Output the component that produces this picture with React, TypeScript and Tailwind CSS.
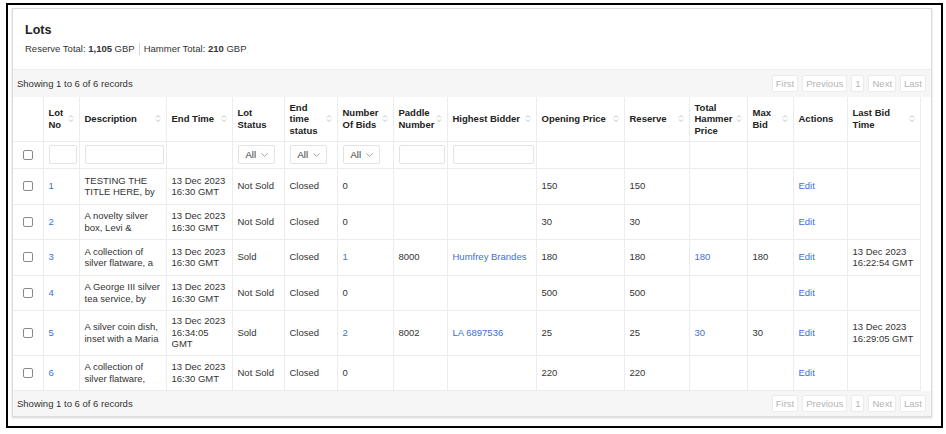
import React from "react";

type Cell = string | { link: string };

interface Lot {
	no: string;
	desc: string[];
	end: string[];
	status: string;
	endStatus: string;
	bids: Cell;
	paddle: string;
	bidder: Cell;
	opening: string;
	reserve: string;
	hammer: Cell;
	maxBid: string;
	lastBid: string[];
	h: string;
}

const lots: Lot[] = [
	{ no: "1", desc: ["TESTING THE", "TITLE HERE, by"], end: ["13 Dec 2023", "16:30 GMT"], status: "Not Sold", endStatus: "Closed", bids: "0", paddle: "", bidder: "", opening: "150", reserve: "150", hammer: "", maxBid: "", lastBid: [], h: "h-[36px]" },
	{ no: "2", desc: ["A novelty silver", "box, Levi &"], end: ["13 Dec 2023", "16:30 GMT"], status: "Not Sold", endStatus: "Closed", bids: "0", paddle: "", bidder: "", opening: "30", reserve: "30", hammer: "", maxBid: "", lastBid: [], h: "h-[35px]" },
	{ no: "3", desc: ["A collection of", "silver flatware, a"], end: ["13 Dec 2023", "16:30 GMT"], status: "Sold", endStatus: "Closed", bids: { link: "1" }, paddle: "8000", bidder: { link: "Humfrey Brandes" }, opening: "180", reserve: "180", hammer: { link: "180" }, maxBid: "180", lastBid: ["13 Dec 2023", "16:22:54 GMT"], h: "h-[36px]" },
	{ no: "4", desc: ["A George III silver", "tea service, by"], end: ["13 Dec 2023", "16:30 GMT"], status: "Not Sold", endStatus: "Closed", bids: "0", paddle: "", bidder: "", opening: "500", reserve: "500", hammer: "", maxBid: "", lastBid: [], h: "h-[35px]" },
	{ no: "5", desc: ["A silver coin dish,", "inset with a Maria"], end: ["13 Dec 2023", "16:34:05", "GMT"], status: "Sold", endStatus: "Closed", bids: { link: "2" }, paddle: "8002", bidder: { link: "LA 6897536" }, opening: "25", reserve: "25", hammer: { link: "30" }, maxBid: "30", lastBid: ["13 Dec 2023", "16:29:05 GMT"], h: "h-[45px]" },
	{ no: "6", desc: ["A collection of", "silver flatware,"], end: ["13 Dec 2023", "16:30 GMT"], status: "Not Sold", endStatus: "Closed", bids: "0", paddle: "", bidder: "", opening: "220", reserve: "220", hammer: "", maxBid: "", lastBid: [], h: "h-[35px]" },
];

const columns: { label: string[]; sort: boolean; w: string }[] = [
	{ label: [], sort: false, w: "w-[30px]" },
	{ label: ["Lot", "No"], sort: true, w: "w-[36px]" },
	{ label: ["Description"], sort: true, w: "w-[87px]" },
	{ label: ["End Time"], sort: true, w: "w-[66px]" },
	{ label: ["Lot", "Status"], sort: false, w: "w-[52px]" },
	{ label: ["End", "time", "status"], sort: true, w: "w-[53px]" },
	{ label: ["Number", "Of Bids"], sort: true, w: "w-[56px]" },
	{ label: ["Paddle", "Number"], sort: true, w: "w-[54px]" },
	{ label: ["Highest Bidder"], sort: true, w: "w-[89px]" },
	{ label: ["Opening Price"], sort: true, w: "w-[88px]" },
	{ label: ["Reserve"], sort: true, w: "w-[65px]" },
	{ label: ["Total", "Hammer", "Price"], sort: true, w: "w-[58px]" },
	{ label: ["Max", "Bid"], sort: true, w: "w-[46px]" },
	{ label: ["Actions"], sort: false, w: "w-[54px]" },
	{ label: ["Last Bid", "Time"], sort: true, w: "w-[73px]" },
];

function SortIcon() {
	return (
		<svg width="6" height="9" viewBox="0 0 6 9" className="shrink-0" fill="none" stroke="#b8b8b8" strokeWidth="0.9">
			<path d="M1 3.5 L3 1.5 L5 3.5" />
			<path d="M1 5.5 L3 7.5 L5 5.5" />
		</svg>
	);
}

function Checkbox() {
	return <div className="mx-auto h-[10px] w-[10px] rounded-[2px] border border-[#8a8a8a] bg-white" />;
}

function FilterSelect() {
	return (
		<div className="flex h-[19px] w-[37px] items-center justify-between rounded-[2px] border border-[#e3e3e3] bg-white pl-[7px] pr-[6px] text-[#333]">
			<span>All</span>
			<svg width="7" height="4" viewBox="0 0 7 4" fill="none" stroke="#8a8a8a" strokeWidth="0.8">
				<path d="M0.5 0.5 L3.5 3.3 L6.5 0.5" />
			</svg>
		</div>
	);
}

function FilterInput({ w }: { w: string }) {
	return <div className={`h-[19px] ${w} rounded-[2px] border border-[#e3e3e3] bg-white`} />;
}

function Value({ v }: { v: Cell }) {
	if (typeof v === "string") return <>{v}</>;
	return <span className="text-[#3d6fd6]">{v.link}</span>;
}

function Pager() {
	return (
		<div className="flex items-center gap-[4px] text-[#b5b5b5]">
			{["First", "Previous", "1", "Next", "Last"].map((p) => (
				<span key={p} className="flex h-[17px] items-center rounded-[2px] border border-[#ececec] bg-white px-[3px]">
					{p}
				</span>
			))}
		</div>
	);
}

export default function App() {
	const td = "border-b border-r border-[#ececec] px-[5px] align-middle";
	return (
		<div className="h-[434px] w-[946px] overflow-hidden bg-white font-['Liberation_Sans',Arial,sans-serif] text-[9.5px] leading-[11.5px] text-[#333]">
			<div className="ml-[6px] mt-[3px] h-[425px] w-[937px] border-2 border-black">
				<div className="ml-[4px] mt-[3px] flex h-[409px] w-[920px] flex-col border border-[#dcdcdc] bg-white shadow-[0_1px_2px_rgba(0,0,0,0.18)]">
					{/* Title */}
					<div className="h-[60px] pl-[12px] pt-[14px]">
						<div className="text-[12.5px] font-bold leading-[15px] text-[#222]">Lots</div>
						<div className="mt-[5px] flex items-center">
							<span>
								Reserve Total: <b>1,105</b> GBP
							</span>
							<span className="mx-[4px] h-[12px] w-px bg-[#d5d5d5]" />
							<span>
								Hammer Total: <b>210</b> GBP
							</span>
						</div>
					</div>

					{/* Top bar */}
					<div className="flex h-[28px] items-center justify-between border-t border-[#eeeeee] bg-[#f6f6f6] pl-[4px] pr-[5px]">
						<span>Showing 1 to 6 of 6 records</span>
						<Pager />
					</div>

					{/* Table */}
					<table className="w-[907px] table-fixed border-collapse">
						<colgroup>
							{columns.map((c, i) => (
								<col key={i} className={c.w} />
							))}
						</colgroup>
						<thead>
							<tr className="h-[44px]">
								{columns.map((c, i) => (
									<th key={i} className={`${td} text-left font-bold text-[#222]`}>
										<div className="flex items-center justify-between gap-[2px]">
											<span>
												{c.label.map((l, j) => (
													<React.Fragment key={j}>
														{j > 0 && <br />}
														{l}
													</React.Fragment>
												))}
											</span>
											{c.sort && <SortIcon />}
										</div>
									</th>
								))}
							</tr>
						</thead>
						<tbody>
							<tr className="h-[27px]">
								<td className={td}>
									<Checkbox />
								</td>
								<td className={`${td} px-[4px]`}>
									<FilterInput w="w-[28px]" />
								</td>
								<td className={`${td} px-[4px]`}>
									<FilterInput w="w-[79px]" />
								</td>
								<td className={td} />
								<td className={`${td} px-[4px]`}>
									<FilterSelect />
								</td>
								<td className={`${td} px-[4px]`}>
									<FilterSelect />
								</td>
								<td className={`${td} px-[4px]`}>
									<FilterSelect />
								</td>
								<td className={`${td} px-[4px]`}>
									<FilterInput w="w-[46px]" />
								</td>
								<td className={`${td} px-[4px]`}>
									<FilterInput w="w-[81px]" />
								</td>
								<td className={td} />
								<td className={td} />
								<td className={td} />
								<td className={td} />
								<td className={td} />
								<td className={td} />
							</tr>
							{lots.map((r) => (
								<tr key={r.no} className={r.h}>
									<td className={td}>
										<Checkbox />
									</td>
									<td className={`${td} text-[#3d6fd6]`}>{r.no}</td>
									<td className={td}>
										{r.desc[0]}
										<br />
										{r.desc[1]}
									</td>
									<td className={td}>
										{r.end.map((l, j) => (
											<div key={j}>{l}</div>
										))}
									</td>
									<td className={td}>{r.status}</td>
									<td className={td}>{r.endStatus}</td>
									<td className={td}>
										<Value v={r.bids} />
									</td>
									<td className={td}>{r.paddle}</td>
									<td className={td}>
										<Value v={r.bidder} />
									</td>
									<td className={td}>{r.opening}</td>
									<td className={td}>{r.reserve}</td>
									<td className={td}>
										<Value v={r.hammer} />
									</td>
									<td className={td}>{r.maxBid}</td>
									<td className={`${td} text-[#3d6fd6]`}>Edit</td>
									<td className={td}>
										{r.lastBid.map((l, j) => (
											<div key={j}>{l}</div>
										))}
									</td>
								</tr>
							))}
						</tbody>
					</table>

					{/* Bottom bar */}
					<div className="flex flex-1 items-center justify-between bg-[#f6f6f6] pl-[4px] pr-[5px]">
						<span>Showing 1 to 6 of 6 records</span>
						<Pager />
					</div>
				</div>
			</div>
		</div>
	);
}
